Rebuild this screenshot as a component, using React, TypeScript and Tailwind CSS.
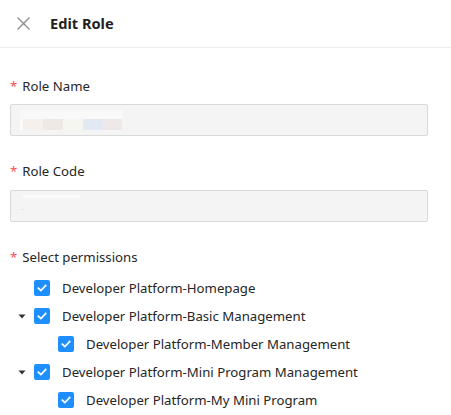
import React from "react";

function Check() {
  return (
    <span className="flex h-4 w-4 shrink-0 items-center justify-center rounded-[2px] bg-[#1e8fff]">
      <svg width="10" height="8" viewBox="0 0 10 8" fill="none">
        <path d="M1.3 4.1 L3.9 6.5 L8.7 1.5" stroke="white" strokeWidth="1.7" strokeLinecap="square" />
      </svg>
    </span>
  );
}

function Caret() {
  return (
    <svg width="8" height="5" viewBox="0 0 8 5">
      <path d="M0.5 0.5 L7.5 0.5 L4 4.5 Z" fill="#333" />
    </svg>
  );
}

function Row({ label, level, caret }: { label: string; level: number; caret?: boolean }) {
  return (
    <div className={`flex h-[28px] items-center ${level === 1 ? "pl-[58px]" : "pl-[18px]"}`}>
      {level === 0 && (
        <span className="flex w-[16px] items-center">{caret ? <Caret /> : null}</span>
      )}
      <Check />
      <span className="ml-3 text-[13.2px] leading-[21px] text-[#262626]">{label}</span>
    </div>
  );
}

function Label({ text }: { text: string }) {
  return (
    <div className="flex items-center text-[13.2px] leading-[21px] text-[#262626]">
      <span className="mr-[5px] text-[#ff4d4f]">*</span>
      {text}
    </div>
  );
}

export default function App() {
  return (
    <div
      className="h-[415px] w-[451px] bg-white"
      style={{ fontFamily: '"Noto Sans", "Open Sans", sans-serif' }}
    >
      <div className="flex h-[48px] items-center border-b border-[#ececec] pl-[17px]">
        <svg width="13" height="13" viewBox="0 0 13 13">
          <path d="M0.5 0.5 L12.5 12.5 M12.5 0.5 L0.5 12.5" stroke="#8c8c8c" strokeWidth="1.3" />
        </svg>
        <span className="ml-[20px] text-[14.6px] font-bold text-[#1f1f1f]">Edit Role</span>
      </div>
      <div className="px-[10px] pr-[23px]">
        <div className="pt-[28px]">
          <Label text="Role Name" />
        </div>
        <div className="mt-[7px] flex h-[32px] flex-col justify-center rounded-[2px] border border-[#d9d9d9] bg-[#f4f4f4] pl-[9px]">
          <div className="flex flex-col">
            <div className="h-[9px] w-[102px] bg-[#f9f9f9]" />
            <div className="flex h-[11px]">
              <div className="w-[3px] bg-[#fbfbfb]" />
              <div className="w-[20px] bg-[#f5f0eb]" />
              <div className="w-[20px] bg-[#efe9e6]" />
              <div className="w-[20px] bg-[#f5f6f0]" />
              <div className="w-[20px] bg-[#e3e9f3]" />
              <div className="w-[19px] bg-[#efe8e8]" />
            </div>
          </div>
        </div>
        <div className="pt-[25px]">
          <Label text="Role Code" />
        </div>
        <div className="mt-[8px] flex h-[32px] flex-col rounded-[2px] border border-[#d9d9d9] bg-[#f4f4f4] pl-[12px] pt-[4px]">
          <div className="h-[3px] w-[57px] bg-[#fbfbfb]" />
          <div className="ml-[-1px] mt-[11px] h-[1px] w-[1px] bg-[#e8c9a8]" />
        </div>
        <div className="pt-[25px]">
          <Label text="Select permissions" />
        </div>
      </div>
      <div className="mt-[6px]">
        <Row label="Developer Platform-Homepage" level={0} />
        <Row label="Developer Platform-Basic Management" level={0} caret />
        <Row label="Developer Platform-Member Management" level={1} />
        <Row label="Developer Platform-Mini Program Management" level={0} caret />
        <Row label="Developer Platform-My Mini Program" level={1} />
      </div>
    </div>
  );
}
